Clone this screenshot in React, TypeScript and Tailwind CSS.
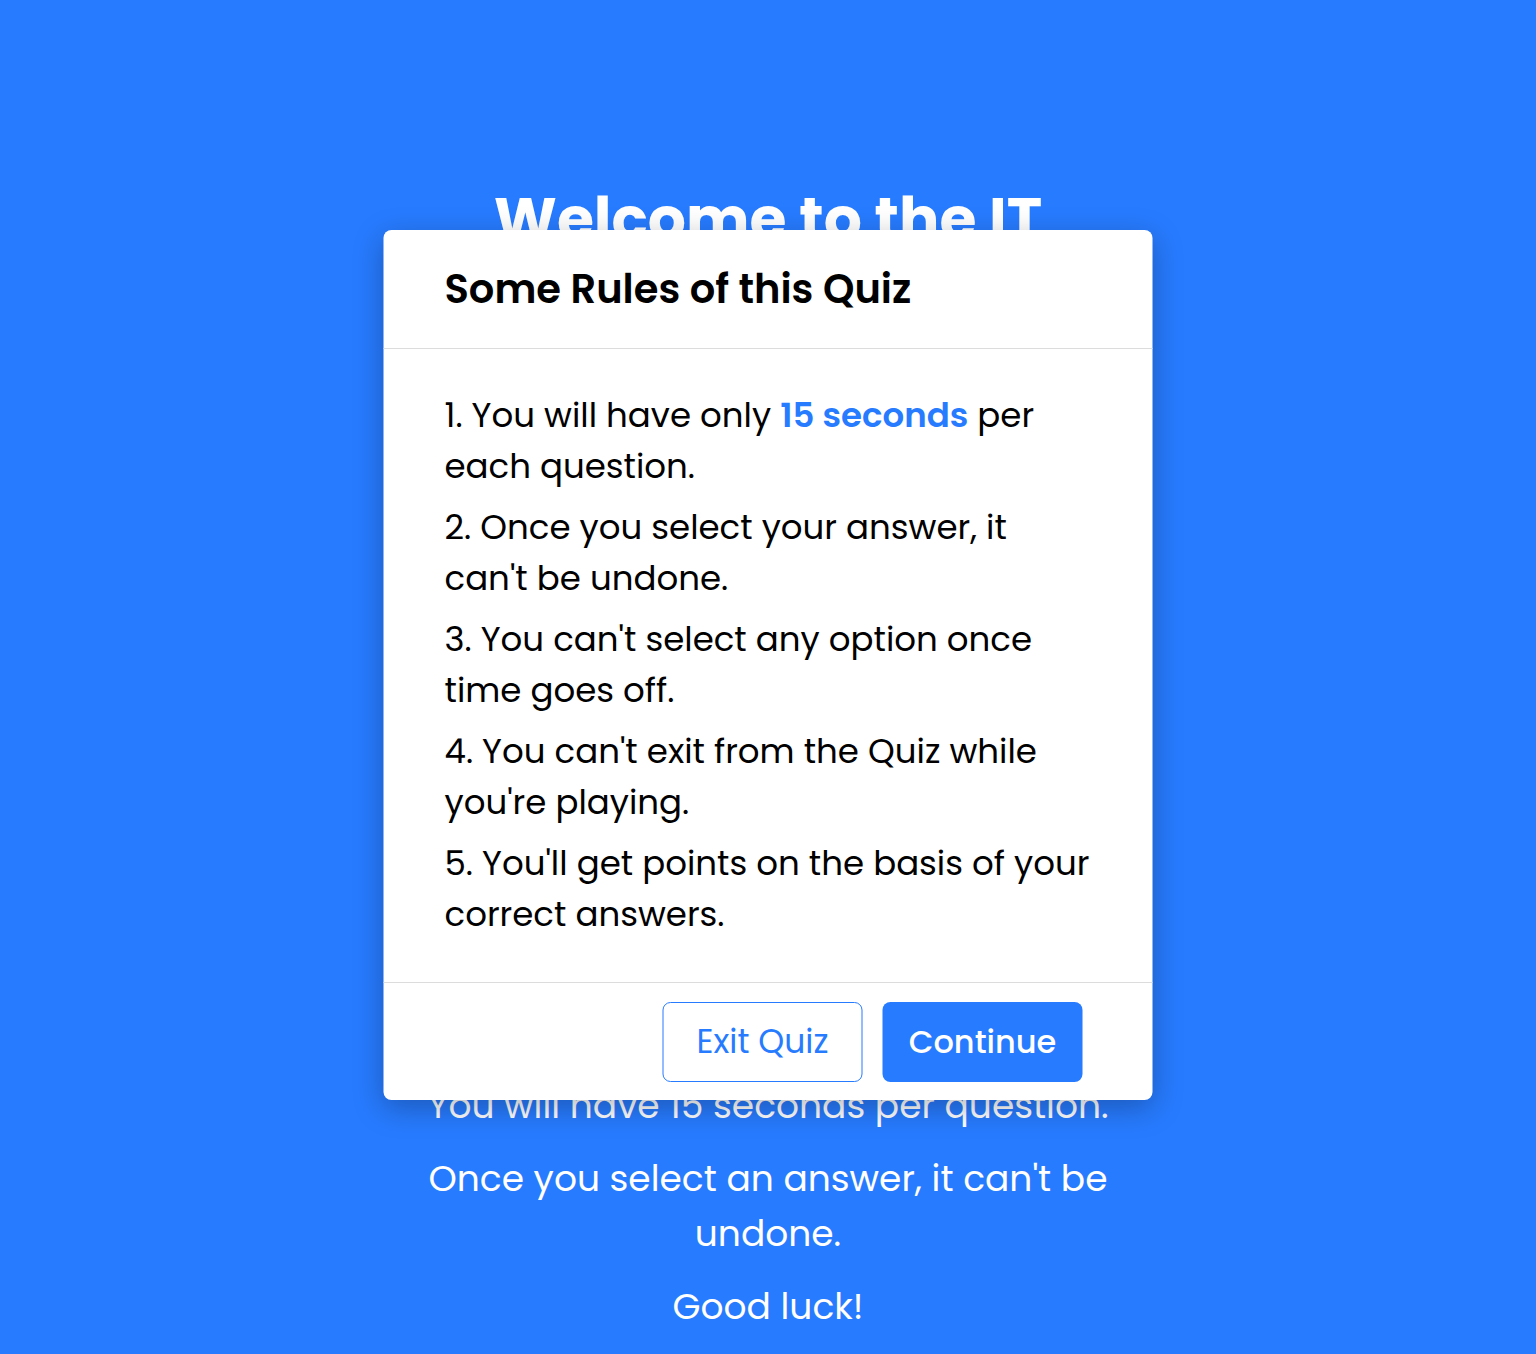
import React from 'react';

const rules: React.ReactNode[] = [
  <>
    You will have only <span className="font-semibold text-[#277bff]">15 seconds</span> per each question.
  </>,
  <>Once you select your answer, it can't be undone.</>,
  <>You can't select any option once time goes off.</>,
  <>You can't exit from the Quiz while you're playing.</>,
  <>You'll get points on the basis of your correct answers.</>,
];

const RulesModal: React.FC = () => (
  <div className="absolute left-1/2 top-[230px] w-[769px] -translate-x-1/2 rounded-lg bg-white shadow-[0_8px_30px_rgba(0,0,0,0.28)]">
    {/* Header */}
    <div className="border-b border-[#dcdcdc] px-[61px] py-[29px]">
      <h2 className="text-[40px] font-semibold leading-[60px] text-black">Some Rules of this Quiz</h2>
    </div>

    {/* Rules list */}
    <div className="flex flex-col gap-[10px] px-[61px] pt-[41px] pb-[42px]">
      {rules.map((rule, i) => (
        <p key={i} className="text-[34px] leading-[51px] text-black">
          {i + 1}. {rule}
        </p>
      ))}
    </div>

    {/* Footer */}
    <div className="flex justify-end gap-5 border-t border-[#dcdcdc] px-[70px] pt-[19px] pb-[18px]">
      <button className="h-[80px] w-[200px] rounded-lg border-[1.5px] border-[#277bff] bg-white text-[33px] text-[#277bff]">
        Exit Quiz
      </button>
      <button className="h-[80px] w-[200px] rounded-lg bg-[#277bff] text-[32px] font-medium text-white">
        Continue
      </button>
    </div>
  </div>
);

export default function App() {
  return (
    <div
      className="relative min-h-[1354px] bg-[#277bff] text-white"
      style={{ fontFamily: "Poppins, Inter, 'Open Sans', sans-serif" }}
    >
      <div className="mx-auto flex w-[690px] flex-col items-center pt-[183px] text-center">
        <h1 className="text-[60px] font-bold leading-[72px]">Welcome to the IT Quiz</h1>
        <div className="mt-[751px] flex flex-col gap-[18px] text-[36px] leading-[55px]">
          <p>You will have 15 seconds per question.</p>
          <p>Once you select an answer, it can't be undone.</p>
          <p>Good luck!</p>
        </div>
      </div>
      <RulesModal />
    </div>
  );
}
